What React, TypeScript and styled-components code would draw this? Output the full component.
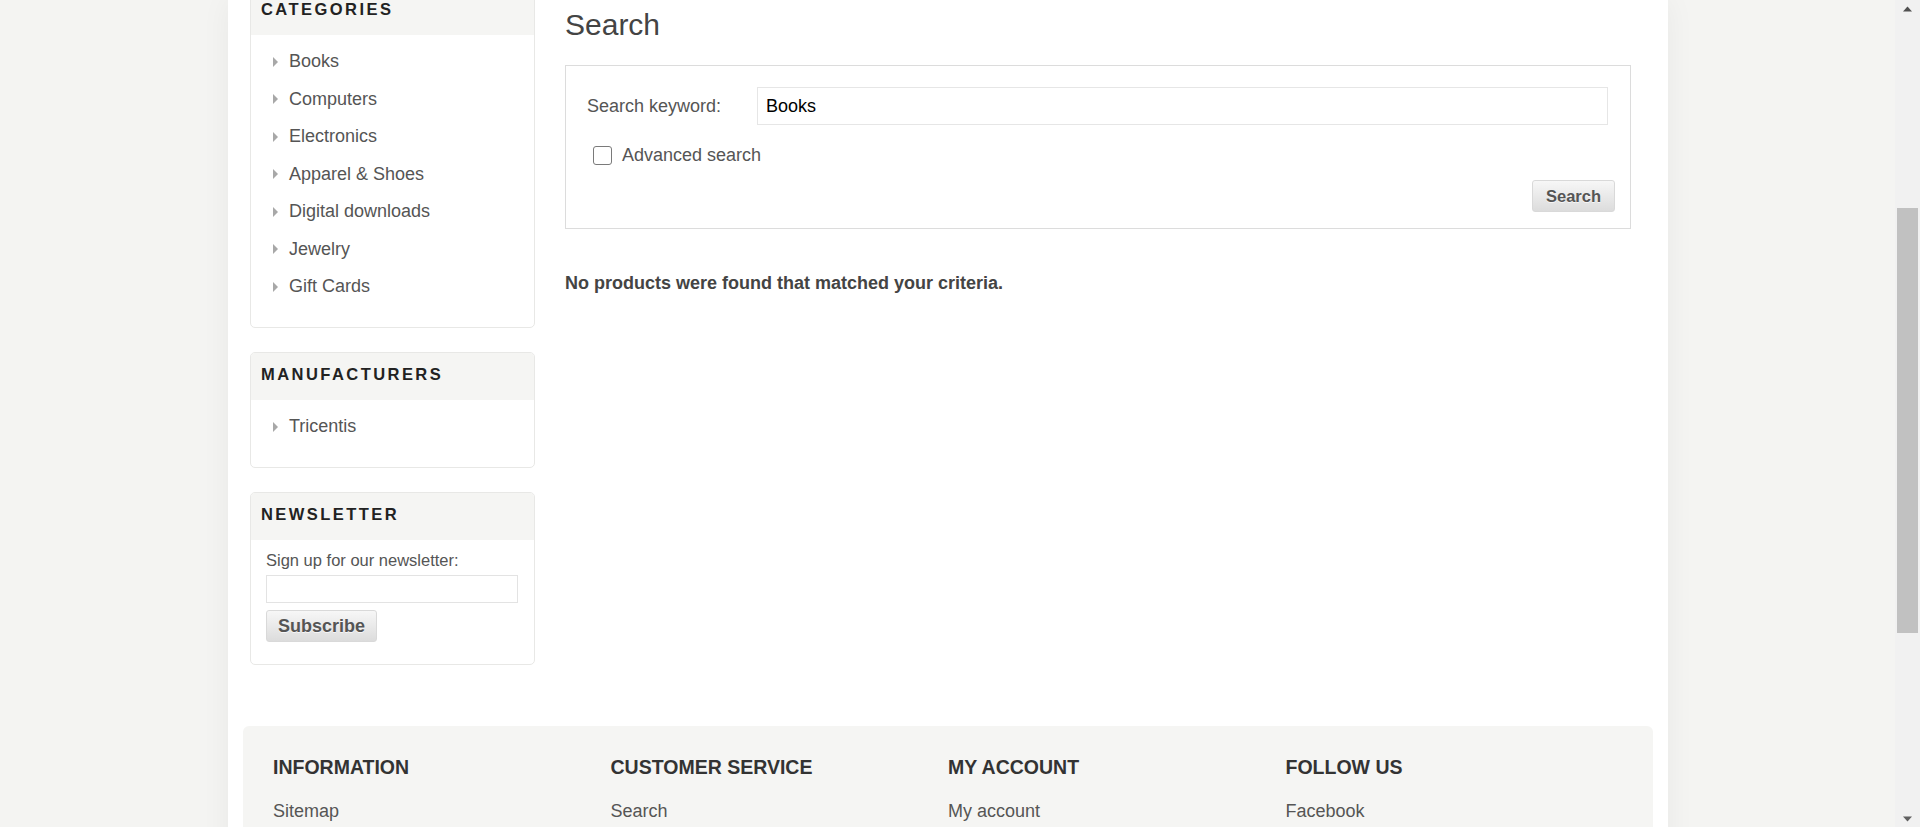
import React from "react";
import styled, { createGlobalStyle } from "styled-components";

const Global = createGlobalStyle`
  html, body { margin: 0; padding: 0; height: 100%; overflow: hidden; }
  body {
    background: #f4f4f2;
    font-family: "Liberation Sans", Arial, Helvetica, sans-serif;
    color: #555;
  }
  * { box-sizing: border-box; }
`;

const Screen = styled.div`
  display: flex;
  width: 1920px;
  height: 827px;
  overflow: hidden;
`;

const Viewport = styled.div`
  flex: 1;
  overflow: hidden;
  display: flex;
`;

const Master = styled.div`
  width: 1440px;
  margin-left: 228px;
  flex-shrink: 0;
  background: #fff;
  box-shadow: 0 0 28px rgba(0, 0, 0, 0.05);
  min-height: 1000px;
`;

const Columns = styled.div`
  display: grid;
  grid-template-columns: 285px 1066px;
  column-gap: 30px;
  align-items: start;
  padding-left: 22px;
  margin-top: -13px;
`;

const Sidebar = styled.aside`
  display: flex;
  flex-direction: column;
  gap: 24px;
`;

const Block = styled.div`
  border: 1px solid #e8e8e6;
  border-radius: 5px;
  overflow: hidden;
  background: #fff;
`;

const BlockTitle = styled.div`
  height: 47px;
  background: #f5f5f3;
  display: flex;
  align-items: center;
  padding: 0 0 4px 10px;
  font-size: 16.5px;
  font-weight: bold;
  letter-spacing: 2.45px;
  text-transform: uppercase;
  color: #222;
`;

const List = styled.ul`
  list-style: none;
  margin: 0;
  padding: 8px 0 21.5px 0;
`;

const Item = styled.li`
  display: flex;
  align-items: center;
  height: 37.5px;
  padding-left: 22px;
  font-size: 18px;
  color: #555;
`;

const Arrow = styled.span`
  width: 0;
  height: 0;
  border-left: 5px solid #a8a8a8;
  border-top: 5.5px solid transparent;
  border-bottom: 5.5px solid transparent;
  margin-right: 11px;
`;

const NewsletterBody = styled.div`
  padding: 9px 15px 22px 15px;
  display: flex;
  flex-direction: column;
  align-items: flex-start;
`;

const NewsletterLabel = styled.label`
  font-size: 16.5px;
  line-height: 22px;
  color: #555;
`;

const NewsletterInput = styled.input`
  width: 252px;
  height: 28px;
  margin-top: 4px;
  border: 1px solid #e3e3e3;
  padding: 0 6px;
  font-family: inherit;
  font-size: 16px;
  outline: none;
`;

const Button = styled.button<{ $size: number; $height: number; $padX: number }>`
  height: ${(p) => p.$height}px;
  padding: 0 ${(p) => p.$padX}px;
  font-family: inherit;
  font-size: ${(p) => p.$size}px;
  font-weight: bold;
  color: #555;
  background: linear-gradient(#f7f7f7, #dcdcdc);
  border: 1px solid #d9d9d9;
  border-radius: 3px;
  text-shadow: 0 1px 0 rgba(255, 255, 255, 0.7);
  cursor: pointer;
`;

const SubscribeButton = styled(Button)`
  margin-top: 7px;
`;

const Main = styled.main`
  display: flex;
  flex-direction: column;
`;

const PageTitle = styled.h1`
  margin: 20px 0 22px 0;
  font-size: 30px;
  line-height: 36px;
  font-weight: normal;
  color: #444;
`;

const SearchBox = styled.div`
  border: 1px solid #dcdcdc;
  padding: 21px 15px 16px 21px;
  display: flex;
  flex-direction: column;
`;

const InputRow = styled.div`
  display: flex;
  align-items: center;
  padding-right: 7px;
`;

const FieldLabel = styled.label`
  width: 170px;
  flex-shrink: 0;
  font-size: 18px;
  color: #555;
`;

const KeywordInput = styled.input`
  flex: 1;
  height: 38px;
  border: 1px solid #e6e6e6;
  padding: 0 8px;
  font-family: inherit;
  font-size: 18px;
  color: #000;
  outline: none;
`;

const CheckRow = styled.div`
  display: flex;
  align-items: center;
  margin-top: 21px;
  padding-left: 6px;
  height: 19px;
`;

const Check = styled.input`
  appearance: none;
  width: 19px;
  height: 19px;
  margin: 0;
  border: 1.5px solid #7a7a7a;
  border-radius: 3px;
  background: #fff;
`;

const CheckLabel = styled.label`
  margin-left: 10px;
  font-size: 18px;
  color: #555;
`;

const ButtonRow = styled.div`
  display: flex;
  justify-content: flex-end;
  margin-top: 15px;
`;

const Message = styled.p`
  margin: 43px 0 0 0;
  font-size: 18px;
  line-height: 22px;
  font-weight: bold;
  color: #444;
`;

const Footer = styled.footer`
  margin: 61px 15px 0 15px;
  background: #f5f5f3;
  border-radius: 6px 6px 0 0;
  padding: 29px 30px 0 30px;
  height: 120px;
  display: grid;
  grid-template-columns: repeat(4, 337.5px);
  align-items: start;
`;

const FooterCol = styled.div`
  display: flex;
  flex-direction: column;
`;

const FooterHeading = styled.h3`
  margin: 0 0 21px 0;
  font-size: 19.5px;
  line-height: 24px;
  font-weight: bold;
  color: #333;
  text-transform: uppercase;
`;

const FooterLink = styled.a`
  font-size: 18px;
  line-height: 22px;
  color: #555;
  text-decoration: none;
`;

const Scrollbar = styled.div`
  width: 25px;
  flex-shrink: 0;
  background: #f1f1f1;
  display: flex;
  flex-direction: column;
`;

const ScrollArrow = styled.div`
  height: 17px;
  display: flex;
  align-items: center;
  justify-content: center;
`;

const Track = styled.div`
  flex: 1;
  padding: 191px 2px 0 2px;
`;

const Thumb = styled.div`
  height: 425px;
  background: #c1c1c1;
`;

const categories = [
  "Books",
  "Computers",
  "Electronics",
  "Apparel & Shoes",
  "Digital downloads",
  "Jewelry",
  "Gift Cards",
];

const footerCols = [
  { title: "Information", link: "Sitemap" },
  { title: "Customer service", link: "Search" },
  { title: "My account", link: "My account" },
  { title: "Follow us", link: "Facebook" },
];

export default function App() {
  return (
    <>
      <Global />
      <Screen>
        <Viewport>
          <Master>
            <Columns>
              <Sidebar>
                <Block>
                  <BlockTitle>Categories</BlockTitle>
                  <List>
                    {categories.map((c) => (
                      <Item key={c}>
                        <Arrow />
                        {c}
                      </Item>
                    ))}
                  </List>
                </Block>
                <Block>
                  <BlockTitle>Manufacturers</BlockTitle>
                  <List>
                    <Item>
                      <Arrow />
                      Tricentis
                    </Item>
                  </List>
                </Block>
                <Block>
                  <BlockTitle>Newsletter</BlockTitle>
                  <NewsletterBody>
                    <NewsletterLabel>Sign up for our newsletter:</NewsletterLabel>
                    <NewsletterInput type="text" />
                    <SubscribeButton $size={18} $height={32} $padX={11}>
                      Subscribe
                    </SubscribeButton>
                  </NewsletterBody>
                </Block>
              </Sidebar>
              <Main>
                <PageTitle>Search</PageTitle>
                <SearchBox>
                  <InputRow>
                    <FieldLabel>Search keyword:</FieldLabel>
                    <KeywordInput type="text" defaultValue="Books" />
                  </InputRow>
                  <CheckRow>
                    <Check type="checkbox" id="adv" />
                    <CheckLabel htmlFor="adv">Advanced search</CheckLabel>
                  </CheckRow>
                  <ButtonRow>
                    <Button $size={16.5} $height={32} $padX={13}>
                      Search
                    </Button>
                  </ButtonRow>
                </SearchBox>
                <Message>No products were found that matched your criteria.</Message>
              </Main>
            </Columns>
            <Footer>
              {footerCols.map((col) => (
                <FooterCol key={col.title}>
                  <FooterHeading>{col.title}</FooterHeading>
                  <FooterLink href="#">{col.link}</FooterLink>
                </FooterCol>
              ))}
            </Footer>
          </Master>
        </Viewport>
        <Scrollbar>
          <ScrollArrow>
            <svg width="9" height="6" viewBox="0 0 9 6">
              <polygon points="0,5.5 4.5,0.5 9,5.5" fill="#505050" />
            </svg>
          </ScrollArrow>
          <Track>
            <Thumb />
          </Track>
          <ScrollArrow>
            <svg width="9" height="6" viewBox="0 0 9 6">
              <polygon points="0,0.5 4.5,5.5 9,0.5" fill="#606060" />
            </svg>
          </ScrollArrow>
        </Scrollbar>
      </Screen>
    </>
  );
}
